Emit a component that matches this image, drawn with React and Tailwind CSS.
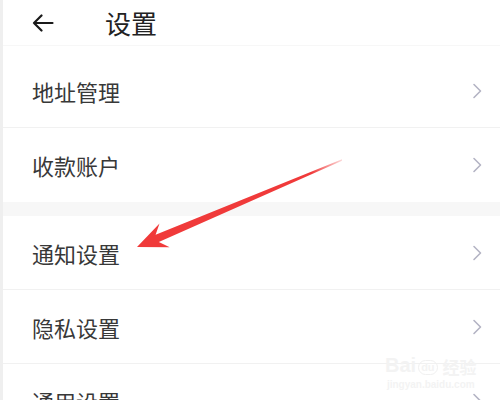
const font = { fontFamily: '"Noto Sans CJK SC", "Noto Sans", sans-serif' };

const Chevron = () => (
  <svg width="10" height="16" viewBox="0 0 10 16" fill="none">
    <path d="M2 1.5 L8.5 8 L2 14.5" stroke="#b4b4c4" strokeWidth="1.6" strokeLinecap="round" strokeLinejoin="round" />
  </svg>
);

const Row = ({ label, border = true }) => (
  <div
    className={`flex-none flex items-center justify-between h-[74px] pl-[29px] pr-[18px] ${
      border ? "border-b border-[#f1f1f1]" : ""
    }`}
  >
    <span className="text-[22px] text-[#383838] leading-none">{label}</span>
    <Chevron />
  </div>
);

export default function App() {
  return (
    <div className="relative w-[500px] h-[400px] overflow-hidden bg-white flex" style={font}>
      <div className="w-[3px] bg-[#efefef] flex-none" />
      <div className="flex-1 flex flex-col">
        <div className="flex-none flex items-center h-[46px] pl-[29px] border-b border-[#f7f7f7]">
          <svg width="22" height="18" viewBox="0 0 22 18" fill="none">
            <path d="M20.5 9 H2 M9.5 1.5 L2 9 L9.5 16.5" stroke="#1a1a1a" strokeWidth="2.2" strokeLinecap="round" strokeLinejoin="round" />
          </svg>
          <span className="ml-[51px] text-[26px] text-[#222222] leading-none">设置</span>
        </div>
        <div className="flex-none h-[8px]" />
        <Row label="地址管理" />
        <Row label="收款账户" border={false} />
        <div className="flex-none h-[14px] bg-[#f7f7f7]" />
        <Row label="通知设置" />
        <Row label="隐私设置" />
        <Row label="通用设置" border={false} />
      </div>

      <svg className="absolute left-0 top-0" width="500" height="400" viewBox="0 0 500 400">
        <defs>
          <linearGradient id="tail" x1="342" y1="160" x2="137" y2="247" gradientUnits="userSpaceOnUse">
            <stop offset="0" stopColor="#f04040" stopOpacity="0.2" />
            <stop offset="0.15" stopColor="#f03a3a" stopOpacity="1" />
            <stop offset="1" stopColor="#f03a3a" />
          </linearGradient>
        </defs>
        <polygon
          points="342,159.3 155.6,234.7 159.5,223.4 137,247 169.7,247.2 158.8,242.1 342,160.7"
          fill="url(#tail)"
        />
      </svg>

      <div className="absolute left-[385px] top-[355px] flex flex-col items-center text-[#f3f3f3]" style={{ fontFamily: '"Liberation Sans", "Noto Sans CJK SC", sans-serif' }}>
        <div className="flex items-end gap-[2px]">
          <span className="text-[20px] font-bold leading-none">Bai</span>
          <span className="text-[11px] font-bold leading-none rounded-full border border-[#f0f0f0] px-[2px] py-[1px]">du</span>
          <span className="text-[17px] font-bold leading-none ml-[3px]" style={font}>经验</span>
        </div>
        <span className="text-[10px] font-bold leading-none mt-[5px]">jingyan.baidu.com</span>
      </div>
    </div>
  );
}
